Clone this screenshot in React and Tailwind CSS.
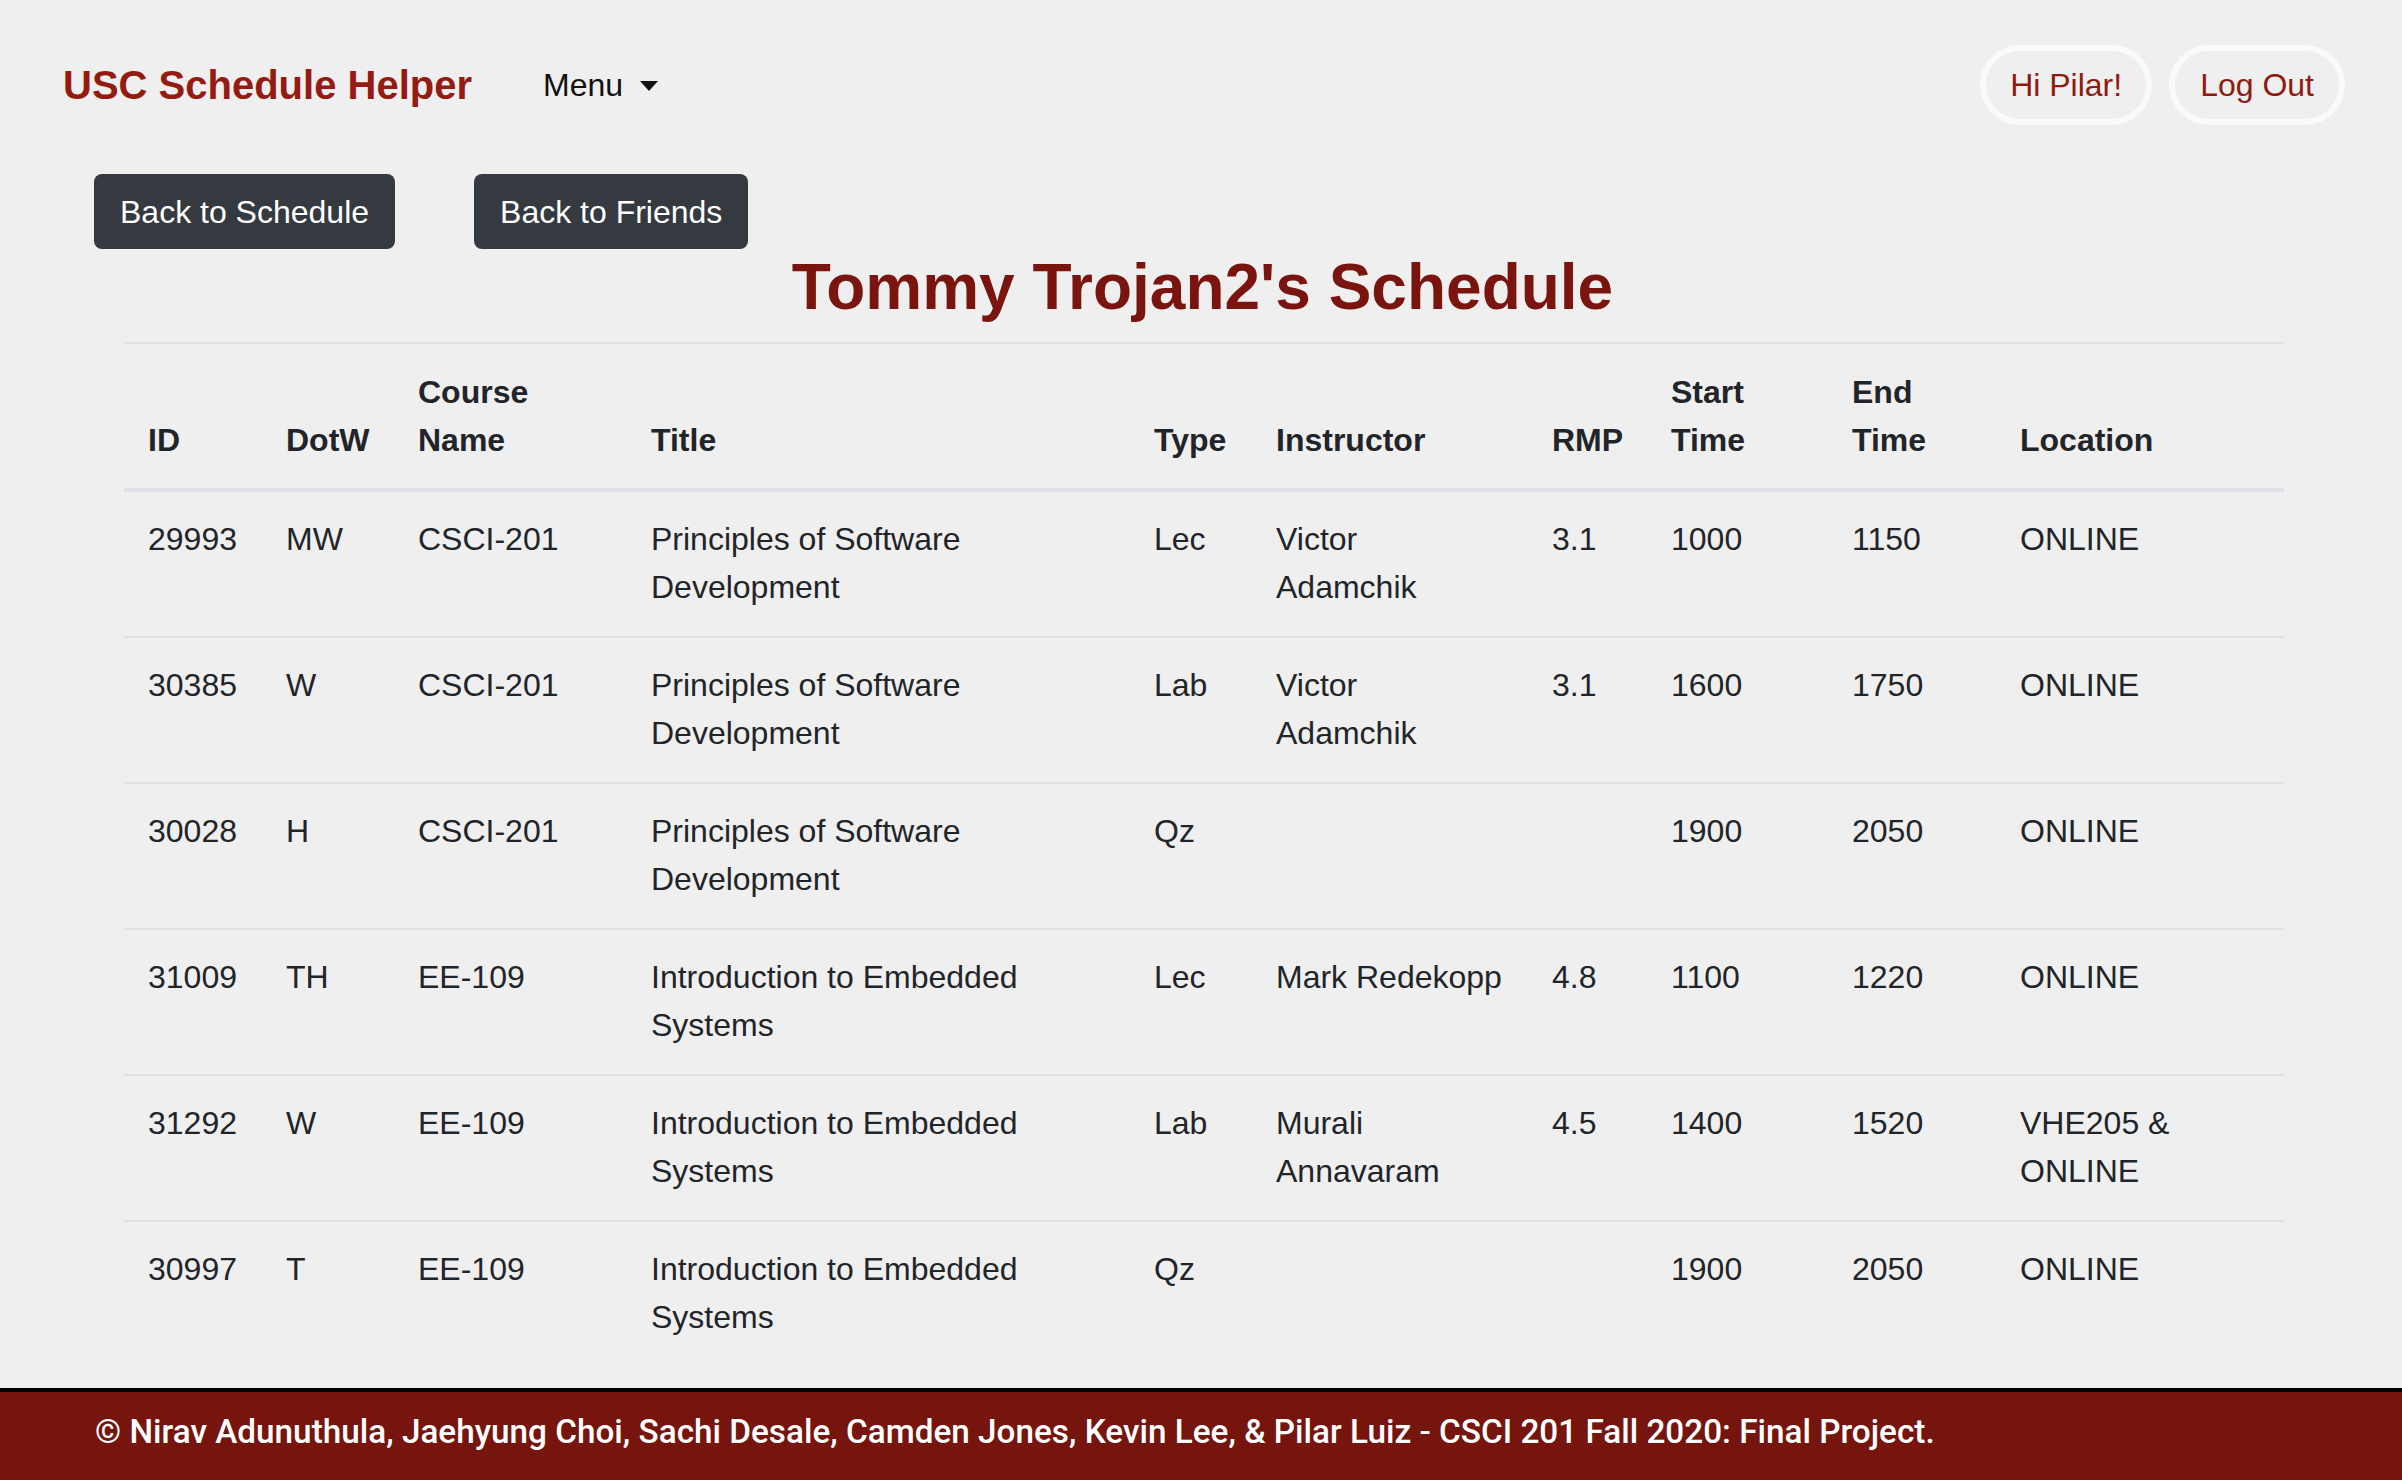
import React from 'react';

const columns = [
  { key: 'id', label: 'ID', width: 'w-[138px]' },
  { key: 'dotw', label: 'DotW', width: 'w-[132px]' },
  { key: 'course', label: 'Course Name', width: 'w-[233px]' },
  { key: 'title', label: 'Title', width: 'w-[503px]' },
  { key: 'type', label: 'Type', width: 'w-[122px]' },
  { key: 'instructor', label: 'Instructor', width: 'w-[276px]' },
  { key: 'rmp', label: 'RMP', width: 'w-[119px]' },
  { key: 'start', label: 'Start Time', width: 'w-[181px]' },
  { key: 'end', label: 'End Time', width: 'w-[168px]' },
  { key: 'location', label: 'Location', width: 'w-[288px]' },
];

const rows = [
  { id: '29993', dotw: 'MW', course: 'CSCI-201', title: 'Principles of Software Development', type: 'Lec', instructor: 'Victor Adamchik', rmp: '3.1', start: '1000', end: '1150', location: 'ONLINE' },
  { id: '30385', dotw: 'W', course: 'CSCI-201', title: 'Principles of Software Development', type: 'Lab', instructor: 'Victor Adamchik', rmp: '3.1', start: '1600', end: '1750', location: 'ONLINE' },
  { id: '30028', dotw: 'H', course: 'CSCI-201', title: 'Principles of Software Development', type: 'Qz', instructor: '', rmp: '', start: '1900', end: '2050', location: 'ONLINE' },
  { id: '31009', dotw: 'TH', course: 'EE-109', title: 'Introduction to Embedded Systems', type: 'Lec', instructor: 'Mark Redekopp', rmp: '4.8', start: '1100', end: '1220', location: 'ONLINE' },
  { id: '31292', dotw: 'W', course: 'EE-109', title: 'Introduction to Embedded Systems', type: 'Lab', instructor: 'Murali Annavaram', rmp: '4.5', start: '1400', end: '1520', location: 'VHE205 & ONLINE' },
  { id: '30997', dotw: 'T', course: 'EE-109', title: 'Introduction to Embedded Systems', type: 'Qz', instructor: '', rmp: '', start: '1900', end: '2050', location: 'ONLINE' },
];

const Navbar = () => (
  <nav className="flex items-center pt-[45px] pl-[63px] pr-[57px]">
    <a href="#" className="text-[40px] font-bold leading-[80px] text-[#931b12]">USC Schedule Helper</a>
    <button className="ml-[71px] flex items-center text-[32px] leading-[48px] text-[#111]">
      Menu
      <span className="ml-[17px] mt-[2px] h-0 w-0 border-x-[9.5px] border-t-[10px] border-x-transparent border-t-[#111]"></span>
    </button>
    <div className="ml-auto flex items-center gap-[17px]">
      <button className="h-[80px] rounded-full border-[6px] border-[#fafafa] px-[24px] text-[32px] text-[#8e1a10]">Hi Pilar!</button>
      <button className="h-[80px] rounded-full border-[6px] border-[#fafafa] px-[25px] text-[32px] text-[#8e1a10]">Log Out</button>
    </div>
  </nav>
);

const App = () => {
  return (
    <div className="flex min-h-screen flex-col bg-[#efefef] font-['Liberation_Sans',Arial,sans-serif] text-[#212529]">
      <Navbar />

      <div className="mt-[49px] flex gap-[79px] pl-[94px]">
        <button className="h-[75px] rounded-[8px] bg-[#343a40] px-[26px] text-[32px] text-white">Back to Schedule</button>
        <button className="h-[75px] rounded-[8px] bg-[#343a40] px-[26px] text-[32px] text-white">Back to Friends</button>
      </div>

      <h2 className="mb-[16px] pl-[3px] text-center text-[64px] font-bold leading-[77px] text-[#7a140e]">Tommy Trojan2's Schedule</h2>

      <table className="ml-[124px] w-[2160px] table-fixed border-collapse text-[32px] leading-[48px]">
        <thead>
          <tr>
            {columns.map((c) => (
              <th key={c.key} className={`${c.width} border-t-2 border-b-4 border-[#dee2e6] p-[24px] text-left align-bottom font-bold`}>
                {c.label}
              </th>
            ))}
          </tr>
        </thead>
        <tbody>
          {rows.map((r, i) => (
            <tr key={r.id}>
              {columns.map((c) => (
                <td key={c.key} className={`${i === 0 ? '' : 'border-t-2'} border-[#dee2e6] px-[24px] pt-[23px] pb-[25px] align-top`}>
                  {r[c.key]}
                </td>
              ))}
            </tr>
          ))}
        </tbody>
      </table>

      <footer className="mt-auto flex h-[92px] items-center border-t-4 border-black bg-[#76150d] pb-[8px] pl-[95px] font-['Roboto',sans-serif] text-[33.3px] font-medium text-white">
        © Nirav Adunuthula, Jaehyung Choi, Sachi Desale, Camden Jones, Kevin Lee, &amp; Pilar Luiz - CSCI 201 Fall 2020: Final Project.
      </footer>
    </div>
  );
};

export default App;
